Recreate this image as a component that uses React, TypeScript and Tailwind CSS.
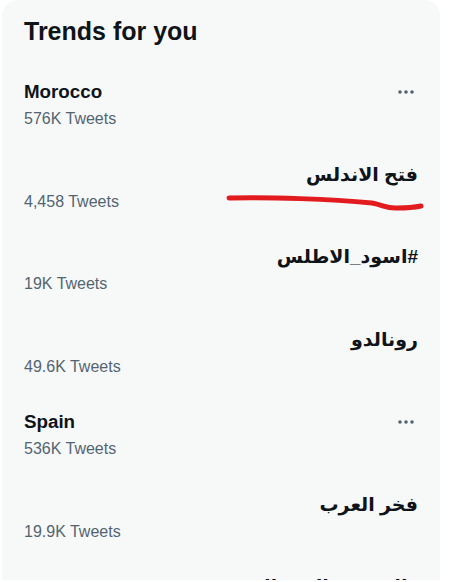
const trends = [
  { name: 'Morocco', count: '576K Tweets', rtl: false },
  { name: 'فتح الاندلس', count: '4,458 Tweets', rtl: true },
  { name: '#اسود_الاطلس', count: '19K Tweets', rtl: true },
  { name: 'رونالدو', count: '49.6K Tweets', rtl: true },
  { name: 'Spain', count: '536K Tweets', rtl: false },
  { name: 'فخر العرب', count: '19.9K Tweets', rtl: true },
  { name: '#المغرب_البرتغال', count: '12.1K Tweets', rtl: true },
];

function MoreDots() {
  return (
    <svg width="18" height="6" viewBox="0 0 18 6" className="shrink-0 fill-[#536471]">
      <circle cx="3" cy="3" r="1.8" />
      <circle cx="9" cy="3" r="1.8" />
      <circle cx="15" cy="3" r="1.8" />
    </svg>
  );
}

export default function App() {
  return (
    <div className="relative min-h-[582px] bg-white pl-[2px] font-['Liberation_Sans','DejaVu_Sans',sans-serif] text-[#0f1419]">
      <div className="h-[580px] w-[438px] overflow-hidden rounded-t-2xl bg-[#f7f9f9]">
        <div className="h-[64px] px-[22px] pt-[17px]">
          <h2 className="text-[25px] font-extrabold leading-[28px]">Trends for you</h2>
        </div>

        {trends.map((t) => (
          <div key={t.name} className="px-[22px] pt-4 pb-[17.5px]">
            <div className="flex h-6 items-center justify-between">
              {t.rtl ? (
                <div dir="rtl" className="w-full text-[19px] font-semibold leading-6">
                  {t.name}
                </div>
              ) : (
                <>
                  <div className="text-[18.75px] font-bold leading-6">{t.name}</div>
                  <div className="mr-[3px]">
                    <MoreDots />
                  </div>
                </>
              )}
            </div>
            <div className="mt-[5px] text-[16px] leading-5 text-[#536471]">{t.count}</div>
          </div>
        ))}
      </div>

      {/* hand drawn underline */}
      <svg className="pointer-events-none absolute left-0 top-0" width="457" height="582">
        <path
          d="M229 198 C 270 197, 330 199, 372 203 C 384 205, 386 209, 398 208 C 408 208, 416 207, 421 206"
          fill="none"
          stroke="#e21b1f"
          strokeWidth="5"
          strokeLinecap="round"
        />
      </svg>
    </div>
  );
}
